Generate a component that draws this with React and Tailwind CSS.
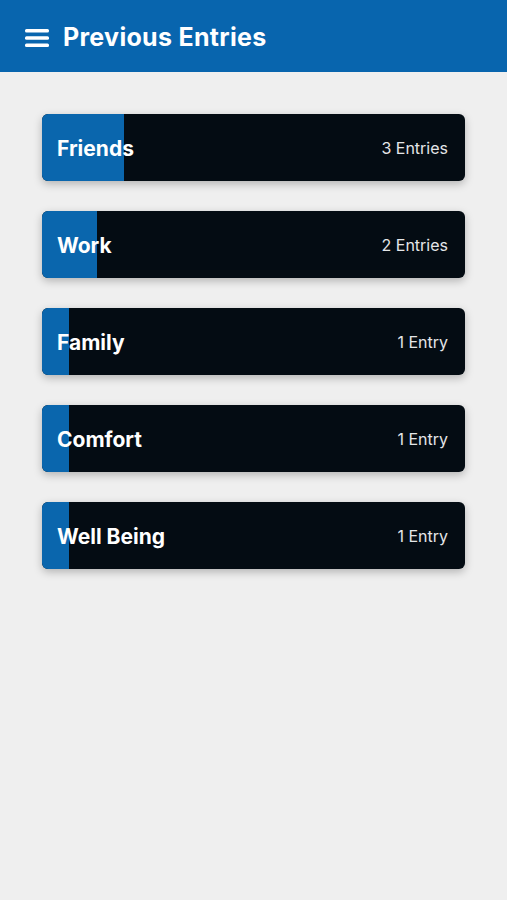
import React from 'react';

const categories = [
  { name: 'Friends', count: 3 },
  { name: 'Work', count: 2 },
  { name: 'Family', count: 1 },
  { name: 'Comfort', count: 1 },
  { name: 'Well Being', count: 1 },
];

const MenuIcon = () => (
  <svg width="24" height="20" viewBox="0 0 24 20" className="block">
    <rect x="0" y="1" width="24" height="3.4" rx="1.5" fill="white" />
    <rect x="0" y="8.3" width="24" height="3.4" rx="1.5" fill="white" />
    <rect x="0" y="15.6" width="24" height="3.4" rx="1.5" fill="white" />
  </svg>
);

const CategoryCard = ({ name, count }) => (
  <div className="relative h-[67px] rounded-[6px] bg-[#040c13] overflow-hidden shadow-[0_3px_8px_rgba(0,0,0,0.25)] flex items-center justify-between pl-[15px] pr-[17px]">
    <div
      className="absolute left-0 top-0 bottom-0 bg-[#0a66ad]"
      style={{ width: `${Math.round(count * 27.4)}px` }}
    />
    <span className="relative text-white font-bold text-[21px] pt-[2px]">{name}</span>
    <span className="relative text-[#e4e6e8] text-[16px]">
      {count} {count === 1 ? 'Entry' : 'Entries'}
    </span>
  </div>
);

export default function App() {
  return (
    <div className="min-h-[900px] bg-[#efefef] font-['Inter',sans-serif]">
      <header className="h-[72px] bg-[#0865ae] flex items-center pl-[25px] gap-[14px] pt-[3px]">
        <MenuIcon />
        <h1 className="text-white font-bold text-[25px] tracking-[0.3px]">Previous Entries</h1>
      </header>
      <main className="px-[42px] pt-[42px] flex flex-col gap-[30px]">
        {categories.map((c) => (
          <CategoryCard key={c.name} name={c.name} count={c.count} />
        ))}
      </main>
    </div>
  );
}
